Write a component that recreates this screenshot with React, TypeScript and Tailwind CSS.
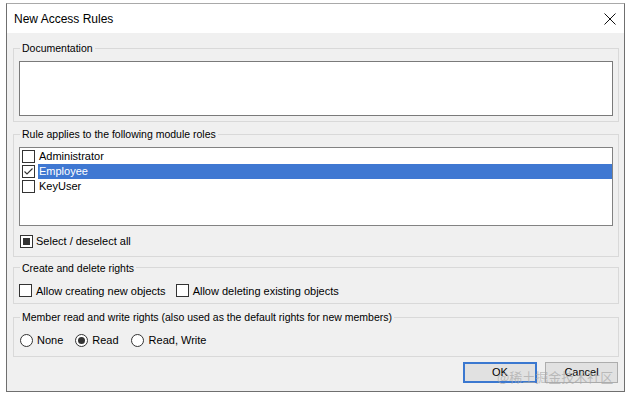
import React from "react";

const font = { fontFamily: '"Liberation Sans", Arial, sans-serif' };

function CheckBox({ checked = false, mixed = false }: { checked?: boolean; mixed?: boolean }) {
  return (
    <span className="relative flex h-[13px] w-[13px] shrink-0 items-center justify-center border border-[#333333] bg-white">
      {checked && (
        <svg width="11" height="11" viewBox="0 0 11 11" className="block">
          <path d="M1.5 5.5 L4 8 L9.5 2.5" fill="none" stroke="#333" strokeWidth="1.1" />
        </svg>
      )}
      {mixed && <span className="block h-[7px] w-[7px] bg-[#333333]" />}
    </span>
  );
}

function Radio({ checked = false }: { checked?: boolean }) {
  return (
    <span className="flex h-[13px] w-[13px] shrink-0 items-center justify-center rounded-full border border-[#333333] bg-white">
      {checked && <span className="block h-[7px] w-[7px] rounded-full bg-[#333333]" />}
    </span>
  );
}

// Windows style group box
function Group({ title, children, className = "" }: { title: string; children: React.ReactNode; className?: string }) {
  return (
    <fieldset className={"border border-[#d9d9d9] px-[5px] " + className}>
      <legend className="ml-[1px] px-[2px] text-[10.5px] leading-[14px]">{title}</legend>
      {children}
    </fieldset>
  );
}

const roles = [
  { name: "Administrator", checked: false },
  { name: "Employee", checked: true },
  { name: "KeyUser", checked: false },
];

export default function App() {
  return (
    <div className="relative h-[400px] w-[628px] overflow-hidden bg-white pl-[6px] pt-[3px] text-black" style={font}>
      <div className="flex h-[389px] w-[619px] flex-col border border-t-[#a9a9a9] border-[#6f6f6f]">
        {/* title bar */}
        <div className="flex h-[29px] shrink-0 items-center justify-between bg-white pl-[7px] pr-[8px]">
          <span className="text-[12px]">New Access Rules</span>
          <svg width="12" height="12" viewBox="0 0 12 12">
            <path d="M0.5 0.5 L11.5 11.5 M11.5 0.5 L0.5 11.5" stroke="#111" strokeWidth="1" fill="none" />
          </svg>
        </div>

        {/* body */}
        <div className="flex flex-1 flex-col bg-[#f0f0f0] pl-[6px] pr-[5px] pt-[8px]">
          <Group title="Documentation" className="pb-[5px]">
            <div className="mt-[6px] h-[55px] border border-[#7a7a7a] bg-white" />
          </Group>

          <Group title="Rule applies to the following module roles" className="mt-[5px] pb-[6px]">
            <div className="mt-[6px] h-[79px] border border-[#828282] bg-white pl-[2px] pt-[1px]">
              {roles.map((r) => (
                <div key={r.name} className="flex h-[15px] items-center">
                  <span className="flex w-[16px] justify-start">
                    <CheckBox checked={r.checked} />
                  </span>
                  <span
                    className={
                      "flex h-[15px] flex-1 items-center pl-[1px] text-[11px] " +
                      (r.checked ? "bg-[#3f78d2] text-white" : "")
                    }
                  >
                    {r.name}
                  </span>
                </div>
              ))}
            </div>
            <div className="mt-[7px] flex items-center gap-[3px] pl-[1px]">
              <CheckBox mixed />
              <span className="text-[11px]">Select / deselect all</span>
            </div>
          </Group>

          <Group title="Create and delete rights" className="mt-[4px] pb-[4px]">
            <div className="mt-[8px] flex items-center">
              <CheckBox />
              <span className="ml-[4px] text-[11px]">Allow creating new objects</span>
              <span className="ml-[10px]">
                <CheckBox />
              </span>
              <span className="ml-[4px] text-[11px]">Allow deleting existing objects</span>
            </div>
          </Group>

          <Group title="Member read and write rights (also used as the default rights for new members)" className="mt-[6px] pb-[7px]">
            <div className="mt-[8px] flex items-center pl-[1px]">
              <Radio />
              <span className="ml-[4px] text-[11px]">None</span>
              <span className="ml-[12px]">
                <Radio checked />
              </span>
              <span className="ml-[4px] text-[11px]">Read</span>
              <span className="ml-[12px]">
                <Radio />
              </span>
              <span className="ml-[5px] text-[11px]">Read, Write</span>
            </div>
          </Group>

          <div className="mt-[5px] flex justify-end gap-[8px] pr-[1px]">
            <button className="h-[21px] w-[74px] border-2 border-[#3b78d0] bg-[#e1e1e1] text-[11px]">OK</button>
            <button className="h-[21px] w-[73px] border border-[#adadad] bg-[#e1e1e1] text-[11px]">Cancel</button>
          </div>
        </div>
      </div>
      <span
        className="pointer-events-none absolute left-[497px] top-[368px] text-[13px] leading-[18px] text-[#a8a8a8]/70"
        style={{ fontFamily: '"Noto Sans CJK SC", sans-serif' }}
      >
        @稀土掘金技术社区
      </span>
    </div>
  );
}
